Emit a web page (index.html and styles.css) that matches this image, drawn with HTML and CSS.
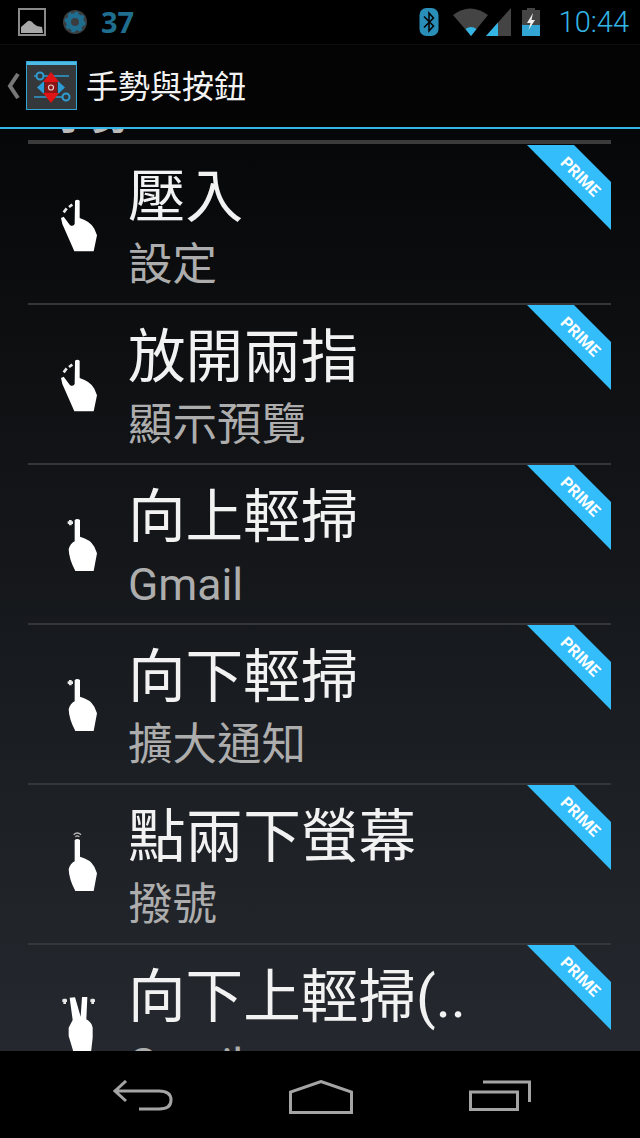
FILE: index.html
```html
<!DOCTYPE html>
<html lang="zh-Hant">
<head>
    <meta charset="UTF-8">
    <meta name="viewport" content="width=device-width, initial-scale=1.0">
    <title>手勢與按鈕</title>
    <link rel="stylesheet" href="styles.css">
</head>
<body>
    <svg class="defs" width="0" height="0">
        <defs>
            <path id="palm" d="M53 12 Q61 6 69 12 L69 62 Q100 70 112 92 L120 112 L110 165 L55 165 Q36 130 35 100 Q40 82 53 76 Z"/>
            <path id="pinch" d="M54 14 Q61 8 68 14 L68 66 Q100 76 112 98 L120 118 L110 166 L52 166 L16 84 L12 66 L20 62 L38 86 Q46 94 53 84 Z"/>
            <g id="ribbon">
                <polygon points="0,0 47,0 84,37 84,85" fill="#33bdfb"/>
                <text x="53" y="37" transform="rotate(45 53 32)" text-anchor="middle" class="ribbon-text">PRIME</text>
            </g>
        </defs>
    </svg>

    <div class="status-bar">
        <div class="status-left">
            <svg width="30" height="30" viewBox="0 0 30 30">
                <rect x="2" y="2" width="26" height="26" fill="none" stroke="#8a8a8a" stroke-width="2"/>
                <path d="M4 26 L4 20 L11 14 Q14 13 17 17 L20 19 L25 20 L26 26 Z" fill="#a8a8a8"/>
            </svg>
            <svg width="26" height="26" viewBox="0 0 26 26">
                <circle cx="13" cy="13" r="12" fill="#3a3d40"/>
                <circle cx="13" cy="13" r="6.5" fill="none" stroke="#1f6e90" stroke-width="5"/>
                <circle cx="13" cy="13" r="9" fill="none" stroke="#1f6e90" stroke-width="3" stroke-dasharray="3.5 3.5"/>
            </svg>
            <span class="battery-num">37</span>
        </div>
        <div class="status-right">
            <svg width="20" height="28" viewBox="0 0 20 28">
                <rect x="0.5" y="0" width="19" height="28" rx="7" fill="#2a8fb8"/>
                <path d="M5 8.5 L14.5 18 L10 23 L10 5 L14.5 10 L5 19.5" fill="none" stroke="#050505" stroke-width="1.6"/>
            </svg>
            <svg class="wifi" width="58" height="28" viewBox="0 0 58 28">
                <path d="M0 7 Q17 -6 35 7 L18 28 Z" fill="#444"/>
                <path d="M12.5 21 Q18 17 23.5 21 L18 28 Z" fill="#33b5e5"/>
                <path d="M33 28 L58 0 L58 28 Z" fill="#444"/>
                <path d="M33 28 L45 14.5 L45 28 Z" fill="#33b5e5"/>
            </svg>
            <svg width="18" height="28" viewBox="0 0 18 28">
                <path d="M5 0 H13 V2 H18 V28 H0 V2 H5 Z" fill="#444"/>
                <rect x="0" y="17" width="18" height="11" fill="#33a5d5"/>
                <path d="M11 5 L5 15 L8.5 15 L6.5 22 L13 12 L9.5 12 Z" fill="#eee"/>
            </svg>
            <span class="clock">10:44</span>
        </div>
    </div>

    <div class="action-bar">
        <svg class="caret" width="13" height="26" viewBox="0 0 13 26">
            <path d="M11 1 L3 13 L11 25" fill="none" stroke="#777" stroke-width="4"/>
        </svg>
        <svg class="app-icon" width="51" height="49" viewBox="0 0 51 49">
            <rect x="0.5" y="0.5" width="50" height="48" fill="#35383a" stroke="#33a5d5"/>
            <rect x="1" y="1" width="49" height="3" fill="#4dbbe6"/>
            <path d="M8 15 H43 M8 36 H43" stroke="#2f9bd0" stroke-width="1.5"/>
            <circle cx="14" cy="15" r="3.5" fill="#35383a" stroke="#2f9bd0" stroke-width="2"/>
            <circle cx="40" cy="36" r="3.5" fill="#35383a" stroke="#2f9bd0" stroke-width="2"/>
            <path d="M18 20 L11 26.5 L18 33 Z M32 20 L39 26.5 L32 33 Z" fill="#2c9bd6"/>
            <path d="M25 11 L33 21 H17 Z M25 42 L33 32 H17 Z" fill="#e01414"/>
            <rect x="19" y="21" width="12" height="11" fill="#8c1414"/>
            <circle cx="25" cy="26.5" r="2.5" fill="none" stroke="#e8d0d0" stroke-width="1.2"/>
        </svg>
        <span class="action-title">手勢與按鈕</span>
    </div>

    <div class="scroller">
        <div class="section-head">手勢</div>
        <div class="row">
            <svg class="hand" viewBox="0 0 120 192">
                <use href="#pinch"/>
                <path d="M20 49 L29 37 M36 33 L46 26" class="dots"/>
            </svg>
            <div class="row-text">
                <div class="title">壓入</div>
                <div class="sub">設定</div>
            </div>
            <svg class="ribbon" width="84" height="85" viewBox="0 0 84 85"><use href="#ribbon"/></svg>
        </div>
        <div class="row">
            <svg class="hand" viewBox="0 0 120 192">
                <use href="#pinch"/>
                <path d="M20 49 L29 37 M36 33 L46 26" class="dots"/>
            </svg>
            <div class="row-text">
                <div class="title">放開兩指</div>
                <div class="sub">顯示預覽</div>
            </div>
            <svg class="ribbon" width="84" height="85" viewBox="0 0 84 85"><use href="#ribbon"/></svg>
        </div>
        <div class="row">
            <svg class="hand" viewBox="0 0 120 192">
                <use href="#palm"/>
                <path d="M40 12 V28 M32 20 H48" class="dots"/>
            </svg>
            <div class="row-text">
                <div class="title">向上輕掃</div>
                <div class="sub">Gmail</div>
            </div>
            <svg class="ribbon" width="84" height="85" viewBox="0 0 84 85"><use href="#ribbon"/></svg>
        </div>
        <div class="row">
            <svg class="hand" viewBox="0 0 120 192">
                <use href="#palm"/>
                <path d="M40 12 V28 M32 20 H48" class="dots"/>
            </svg>
            <div class="row-text">
                <div class="title">向下輕掃</div>
                <div class="sub">擴大通知</div>
            </div>
            <svg class="ribbon" width="84" height="85" viewBox="0 0 84 85"><use href="#ribbon"/></svg>
        </div>
        <div class="row">
            <svg class="hand" viewBox="0 0 120 192">
                <use href="#palm"/>
                <path d="M50 -4 Q61 -14 72 -4 M55 2 Q61 -3 67 2" class="ring"/>
            </svg>
            <div class="row-text">
                <div class="title">點兩下螢幕</div>
                <div class="sub">撥號</div>
            </div>
            <svg class="ribbon" width="84" height="85" viewBox="0 0 84 85"><use href="#ribbon"/></svg>
        </div>
        <div class="row">
            <svg class="hand" viewBox="0 0 120 192">
                <path d="M38 5 L54 4 L71 62 L75 3 L91 3 L88 70 Q105 80 107 95 V125 L102 170 H50 L35 120 V95 L47 72 Z"/>
                <path d="M23 8 V24 M16 14 H30 M107 8 V24 M100 14 H114" class="dots"/>
            </svg>
            <div class="row-text">
                <div class="title">向下上輕掃(..</div>
                <div class="sub">Gmail</div>
            </div>
            <svg class="ribbon" width="84" height="85" viewBox="0 0 84 85"><use href="#ribbon"/></svg>
        </div>
    </div>

    <div class="nav-bar">
        <svg width="60" height="31" viewBox="0 0 60 31">
            <path d="M13 1 L2 11 L13 21 M2 11 H46 Q58 11 58 20 Q58 29 46 29 H26" class="nav-line"/>
        </svg>
        <svg width="64" height="34" viewBox="0 0 64 34">
            <path d="M1.5 32.5 V12 L32 1.5 L62.5 12 V32.5 Z" class="nav-line"/>
        </svg>
        <svg width="62" height="31" viewBox="0 0 62 31">
            <path d="M14 2 H60.5 V22 M1.5 12 H48.5 V29.5 H1.5 Z" class="nav-line"/>
        </svg>
    </div>
</body>
</html>
```

FILE: styles.css
```css
* {
    box-sizing: border-box;
}
html, body {
    margin: 0;
    height: 1138px;
    overflow: hidden;
}
body {
    display: flex;
    flex-direction: column;
    background: #000;
    font-family: Roboto, "Noto Sans CJK TC", "Noto Sans", sans-serif;
    color: #f2f2f2;
}
.defs {
    position: absolute;
}
.status-bar {
    height: 45px;
    flex: none;
    display: flex;
    justify-content: space-between;
    align-items: center;
    padding: 0 11px 1px 17px;
    background: #000;
    border-bottom: 1px solid #0d0d0d;
}
.status-left, .status-right {
    display: flex;
    align-items: center;
}
.status-left svg + svg {
    margin-left: 15px;
}
.battery-num {
    margin-left: 13px;
    font: bold 29px "Open Sans", sans-serif;
    color: #1f6e90;
}
.status-right svg {
    margin-right: 14px;
}
.status-right .wifi {
    margin-right: 11px;
}
.clock {
    margin-left: 5px;
    font: 300 29px Roboto, sans-serif;
    color: #33b5e5;
}
.action-bar {
    height: 84px;
    flex: none;
    display: flex;
    align-items: center;
    padding: 0 0 1px 7px;
    background: #040404;
    border-bottom: 2px solid #33b5e5;
}
.app-icon {
    margin-left: 6px;
}
.action-title {
    margin: 3px 0 0 9px;
    font-size: 32px;
    line-height: 40px;
}
.scroller {
    flex: 1;
    min-height: 0;
    overflow: hidden;
    padding: 0 29px 0 28px;
    background: linear-gradient(#060708, #25292f);
}
.section-head {
    margin: -30px 0 1px;
    height: 45px;
    padding-left: 25px;
    font-size: 38px;
    font-weight: bold;
    line-height: 35px;
    color: #bbb;
    border-bottom: 4px solid #3b3b3b;
}
.row {
    position: relative;
    height: 160px;
    display: flex;
    border-bottom: 2px solid #34363a;
}
.hand {
    flex: none;
    width: 40px;
    height: 64px;
    margin: 51px 31px 0 29px;
    overflow: visible;
    fill: #fff;
}
.dots {
    fill: none;
    stroke: #e8e8e8;
    stroke-width: 8;
}
.ring {
    fill: none;
    stroke: #bbb;
    stroke-width: 4;
}
.row-text {
    min-width: 0;
}
.title {
    font-size: 57.6px;
    line-height: 72px;
    margin-top: 17px;
    white-space: nowrap;
}
.sub {
    font-size: 44.5px;
    line-height: 56px;
    margin-top: 3px;
    color: #adadad;
    white-space: nowrap;
}
.ribbon {
    position: absolute;
    top: 0;
    right: 0;
}
.ribbon-text {
    font: bold 16px Roboto, sans-serif;
    fill: #fff;
}
.nav-bar {
    height: 87px;
    flex: none;
    display: flex;
    align-items: flex-start;
    gap: 116px;
    padding: 29px 0 0 113px;
    background: #000;
    position: relative;
}
.nav-line {
    fill: none;
    stroke: #a4a4a4;
    stroke-width: 3;
}
```
